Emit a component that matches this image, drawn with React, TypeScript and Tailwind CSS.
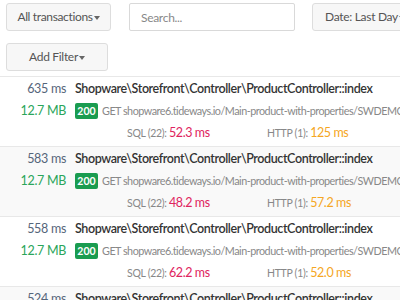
import React from 'react';

const rows = [
  { ms: '635 ms', sql: '52.3 ms', http: '125 ms' },
  { ms: '583 ms', sql: '48.2 ms', http: '57.2 ms' },
  { ms: '558 ms', sql: '62.2 ms', http: '52.0 ms' },
  { ms: '524 ms', sql: '50.1 ms', http: '51.3 ms' },
];

const Caret = () => (
  <span className="inline-block w-0 h-0 ml-[1px] align-middle border-x-[3px] border-x-transparent border-t-[4px] border-t-[#666]" />
);

export default function App() {
  return (
    <div
      className="h-[300px] w-[400px] overflow-hidden bg-white text-[#333]"
      style={{ fontFamily: 'Lato, "Open Sans", sans-serif' }}
    >
      {/* Filters */}
      <div className="pl-[6px] pt-[3px] pb-[5px] border-b border-[#e8e8e8]">
        <div className="flex items-center whitespace-nowrap">
          <button className="h-[28px] w-[105px] shrink-0 rounded-[3px] border border-[#ddd] bg-[#f7f7f7] text-[12px] tracking-[-0.35px] text-[#555]">
            All transactions<Caret />
          </button>
          <input
            className="ml-[18px] h-[28px] w-[166px] shrink-0 rounded-[2px] border border-[#d9d9d9] px-[11px] text-[12px] tracking-[-0.3px] placeholder:text-[#888] outline-none"
            placeholder="Search..."
          />
          <button className="ml-[17px] h-[28px] w-[110px] shrink-0 rounded-[3px] border border-[#ddd] bg-[#f7f7f7] pl-[12px] text-left text-[12px] tracking-[-0.3px] text-[#555]">
            Date: Last Day<Caret />
          </button>
        </div>
        <button className="mt-[12px] h-[28px] w-[102px] rounded-[3px] border border-[#ddd] bg-[#f7f7f7] text-[12px] tracking-[-0.3px] text-[#555]">
          Add Filter<Caret />
        </button>
      </div>

      {/* Transactions */}
      <div>
        {rows.map((r, i) => (
          <div
            key={i}
            className={`flex pt-[1px] pb-[2px] border-b border-[#e8e8e8] whitespace-nowrap overflow-hidden ${
              i % 2 === 1 ? 'bg-[#f9f9f9]' : 'bg-white'
            }`}
          >
            <div className="w-[66px] shrink-0 text-right text-[12.5px] tracking-[-0.3px]">
              <div className="h-[22px] leading-[22px] text-[#55657a]">{r.ms}</div>
              <div className="h-[22px] leading-[22px] text-[#2aa55a]">12.7 MB</div>
            </div>
            <div className="ml-[9px] min-w-0">
              <div className="h-[22px] leading-[22px] text-[12.5px] font-semibold tracking-[-0.4px] text-[#333]">
                Shopware\Storefront\Controller\ProductController::index
              </div>
              <div className="flex h-[22px] items-center text-[10.8px] tracking-[-0.5px] text-[#888]">
                <span className="mr-[4px] w-[23px] shrink-0 rounded-[2px] bg-[#1a9c50] text-center text-[10.5px] font-bold tracking-normal leading-[16px] text-white">
                  200
                </span>
                GET shopware6.tideways.io/Main-product-with-properties/SWDEMO10007.1
              </div>
              <div className="flex h-[22px] items-center pl-[52px] text-[10.5px] tracking-[-0.3px] text-[#888]">
                <span className="w-[140px] shrink-0">
                  SQL (22): <span className="text-[12.5px] tracking-[-0.4px] text-[#e0245e]">{r.sql}</span>
                </span>
                <span>
                  HTTP (1): <span className="text-[12.5px] tracking-[-0.4px] text-[#f5a623]">{r.http}</span>
                </span>
              </div>
            </div>
          </div>
        ))}
      </div>
    </div>
  );
}
